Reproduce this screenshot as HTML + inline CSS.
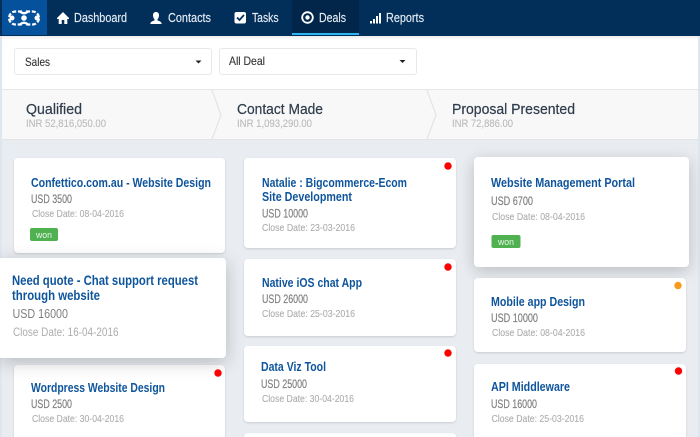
<!DOCTYPE html>
<html>
<head>
<meta charset="utf-8">
<style>
html,body{margin:0;padding:0;width:700px;height:437px;overflow:hidden;background:#e9edf1;font-family:"Liberation Sans",sans-serif}
#w{position:relative;width:700px;height:437px;overflow:hidden;background:#e9edf1}
.a{position:absolute;box-sizing:border-box}
.card{position:absolute;box-sizing:border-box;background:#fff;border-radius:4px;box-shadow:0 1px 2px rgba(0,0,0,.14)}
svg{position:absolute;left:0;top:0}
.t{font-size:12.5px;font-weight:700;fill:#0f559c}
.u{font-size:11.5px;fill:#808080;stroke:#808080;stroke-width:.18px}
.c{font-size:10.5px;fill:#adadad;stroke:#adadad;stroke-width:.1px}
.n{font-size:12.5px;fill:#e4ecf4;stroke:#e4ecf4;stroke-width:.15px}
.h{font-size:14.5px;fill:#2f3d4c;stroke:#2f3d4c;stroke-width:.2px}
.i{font-size:11px;fill:#bababa;stroke:#bababa;stroke-width:.1px}
.s{font-size:12px;fill:#333;stroke:#333;stroke-width:.12px}
</style>
</head>
<body>
<div id="w">
<div class="a" style="left:0;top:0;width:2px;height:437px;background:#dfe6ee"></div>
<div class="a" style="left:698px;top:0;width:2px;height:437px;background:#dfe6ee"></div>
<div class="a" style="left:2px;top:36px;width:696px;height:54px;background:#fff;box-shadow:inset 0 4px 3px -2px rgba(0,0,0,.08)"></div>
<div class="a" style="left:0;top:0;width:700px;height:35.5px;background:#022f5a"></div>
<div class="a" style="left:2px;top:0;width:45px;height:35px;background:#05519c"></div>
<div class="a" style="left:292px;top:0;width:67px;height:35px;background:#012649"></div>
<div class="a" style="left:292px;top:33px;width:67px;height:2px;background:#2db5f0"></div>
<div class="a" style="left:14px;top:48px;width:198px;height:27px;background:#fff;border:1px solid #e8e8e8;border-radius:3px"></div>
<div class="a" style="left:219px;top:48px;width:198px;height:27px;background:#fff;border:1px solid #e8e8e8;border-radius:3px"></div>
<div class="a" style="left:2px;top:89px;width:696px;height:51px;background:#f8f8f8;border-top:1.5px solid #e6e6e6;border-bottom:1.5px solid #e2e4e6"></div>

<div class="card" style="left:14px;top:158px;width:211px;height:95px"></div>
<div class="card" style="left:14px;top:365px;width:211px;height:80px"></div>
<div class="card" style="left:244px;top:158px;width:212px;height:90px"></div>
<div class="card" style="left:244px;top:259px;width:212px;height:77px"></div>
<div class="card" style="left:244px;top:346px;width:212px;height:76px"></div>
<div class="card" style="left:244px;top:433px;width:212px;height:20px"></div>
<div class="card" style="left:474px;top:157px;width:215px;height:110px;box-shadow:0 4px 16px rgba(0,0,0,.2)"></div>
<div class="card" style="left:474px;top:278px;width:212px;height:74px"></div>
<div class="card" style="left:474px;top:364px;width:212px;height:80px"></div>
<div class="card" style="left:0;top:258px;width:226px;height:100px;border-radius:0 4px 4px 0;box-shadow:0 4px 18px rgba(0,0,0,.22)"></div>

<svg width="700" height="437" viewBox="0 0 700 437" xmlns="http://www.w3.org/2000/svg">
<!-- logo -->
<g fill="none" stroke="#fff" stroke-width="2.2" stroke-dasharray="4 1.8">
<path d="M22 11.500H15.500a6.500 6.500 0 0 0 0 13H22"/>
<path d="M26 11.500H32.500a6.500 6.500 0 0 1 0 13H26"/>
<path d="M20 24.500Q24 21 28 24.500" stroke-dasharray="none"/>
<path d="M20 11.500Q24 15 28 11.500" stroke-dasharray="none"/>
</g>
<circle cx="12" cy="18" r="2.500" fill="#fff"/><circle cx="24" cy="18" r="2.800" fill="#fff"/><circle cx="37" cy="18" r="2.500" fill="#fff"/>

<!-- nav icons -->
<path d="M63 12 L57 18 V19 H58.700 V24 H61.700 V20 H64.300 V24 H67.300 V19 H69 V18 Z" fill="#fff"/>
<path d="M156 12c2 0 3 1.300 3 3.200s-.8 3.300-1.500 4v1.200c1.300.6 4 1 4.200 3.600h-11.400c.2-2.600 2.900-3 4.200-3.600v-1.200c-.7-.7-1.500-2.100-1.500-4s1-3.200 3-3.200z" fill="#fff"/>
<rect x="234.500" y="12" width="11.500" height="11.500" rx="2" fill="#fff"/>
<path d="M237 17.500l2.500 2.500 4.500-5" fill="none" stroke="#022f5a" stroke-width="1.700"/>
<circle cx="307.500" cy="17.500" r="5.300" fill="none" stroke="#fff" stroke-width="1.800"/>
<circle cx="307.500" cy="17.500" r="2.200" fill="#fff"/>
<g fill="#fff"><rect x="370" y="21" width="2" height="2.500"/><rect x="373" y="19" width="2" height="4.500"/><rect x="376" y="16" width="2" height="7.500"/><rect x="379" y="13" width="2" height="10.500"/></g>

<!-- nav text -->
<text class="n" x="74" y="22" textLength="53" lengthAdjust="spacingAndGlyphs">Dashboard</text>
<text class="n" x="168" y="22" textLength="43" lengthAdjust="spacingAndGlyphs">Contacts</text>
<text class="n" x="252" y="22" textLength="26.500" lengthAdjust="spacingAndGlyphs">Tasks</text>
<text class="n" x="319" y="22" textLength="27" lengthAdjust="spacingAndGlyphs">Deals</text>
<text class="n" x="386" y="22" textLength="38" lengthAdjust="spacingAndGlyphs">Reports</text>

<!-- selects -->
<text class="s" x="25" y="66" textLength="25" lengthAdjust="spacingAndGlyphs">Sales</text>
<path d="M195.500 60.500h6l-3 3z" fill="#222"/>
<text class="s" x="229" y="65" textLength="36" lengthAdjust="spacingAndGlyphs">All Deal</text>
<path d="M399.500 60h6l-3 3z" fill="#222"/>

<!-- stages -->
<path d="M212 90 L221 115 L212 139 M427 90 L436 115 L427 139" fill="none" stroke="#e4e4e4" stroke-width="1.200"/>
<text class="h" x="26" y="114" textLength="56" lengthAdjust="spacingAndGlyphs">Qualified</text>
<text class="i" x="26" y="127" textLength="80" lengthAdjust="spacingAndGlyphs">INR 52,816,050.00</text>
<text class="h" x="237" y="114" textLength="86" lengthAdjust="spacingAndGlyphs">Contact Made</text>
<text class="i" x="237" y="127" textLength="75" lengthAdjust="spacingAndGlyphs">INR 1,093,290.00</text>
<text class="h" x="452" y="114" textLength="123" lengthAdjust="spacingAndGlyphs">Proposal Presented</text>
<text class="i" x="452" y="127" textLength="61" lengthAdjust="spacingAndGlyphs">INR 72,886.00</text>

<!-- column 1 -->
<text class="t" x="31" y="187" textLength="180" lengthAdjust="spacingAndGlyphs">Confettico.com.au - Website Design</text>
<text class="u" x="31" y="203" textLength="41" lengthAdjust="spacingAndGlyphs">USD 3500</text>
<text class="c" x="32" y="217" textLength="92" lengthAdjust="spacingAndGlyphs">Close Date: 08-04-2016</text>
<rect x="30" y="228" width="28" height="13" rx="2" fill="#4fb150"/>
<text x="36" y="238" font-size="9.500" fill="#eaf6ea" textLength="16" lengthAdjust="spacingAndGlyphs">won</text>

<text x="12" y="285" font-size="13.500" font-weight="700" fill="#0f559c" textLength="186" lengthAdjust="spacingAndGlyphs">Need quote - Chat support request</text>
<text x="12" y="300" font-size="13.500" font-weight="700" fill="#0f559c" textLength="88" lengthAdjust="spacingAndGlyphs">through website</text>
<text x="12.500" y="318" font-size="13" fill="#808080" textLength="55.500" lengthAdjust="spacingAndGlyphs">USD 16000</text>
<text x="13" y="336" font-size="12" fill="#adadad" textLength="105.500" lengthAdjust="spacingAndGlyphs">Close Date: 16-04-2016</text>

<text class="t" x="31" y="392" textLength="134" lengthAdjust="spacingAndGlyphs">Wordpress Website Design</text>
<text class="u" x="31" y="408" textLength="41" lengthAdjust="spacingAndGlyphs">USD 2500</text>
<text class="c" x="32" y="422" textLength="92" lengthAdjust="spacingAndGlyphs">Close Date: 30-04-2016</text>
<circle cx="218" cy="373" r="3.700" fill="#f00"/>

<!-- column 2 -->
<text class="t" x="262" y="187" textLength="145" lengthAdjust="spacingAndGlyphs">Natalie : Bigcommerce-Ecom</text>
<text class="t" x="262" y="201" textLength="90" lengthAdjust="spacingAndGlyphs">Site Development</text>
<text class="u" x="262" y="217.500" textLength="46" lengthAdjust="spacingAndGlyphs">USD 10000</text>
<text class="c" x="262" y="231" textLength="93" lengthAdjust="spacingAndGlyphs">Close Date: 23-03-2016</text>
<circle cx="448" cy="166" r="3.700" fill="#f00"/>

<text class="t" x="262" y="287" textLength="100" lengthAdjust="spacingAndGlyphs">Native iOS chat App</text>
<text class="u" x="262" y="303" textLength="46" lengthAdjust="spacingAndGlyphs">USD 26000</text>
<text class="c" x="262" y="317" textLength="93" lengthAdjust="spacingAndGlyphs">Close Date: 25-03-2016</text>
<circle cx="448" cy="267" r="3.700" fill="#f00"/>

<text class="t" x="261" y="371" textLength="65" lengthAdjust="spacingAndGlyphs">Data Viz Tool</text>
<text class="u" x="261" y="388" textLength="46" lengthAdjust="spacingAndGlyphs">USD 25000</text>
<text class="c" x="262" y="402" textLength="92" lengthAdjust="spacingAndGlyphs">Close Date: 30-04-2016</text>
<circle cx="448" cy="353" r="3.700" fill="#f00"/>

<!-- column 3 -->
<text class="t" x="491" y="187" textLength="144" lengthAdjust="spacingAndGlyphs">Website Management Portal</text>
<text class="u" x="491" y="205" textLength="42" lengthAdjust="spacingAndGlyphs">USD 6700</text>
<text class="c" x="492" y="220" textLength="93" lengthAdjust="spacingAndGlyphs">Close Date: 08-04-2016</text>
<rect x="491.500" y="235" width="29" height="13" rx="2" fill="#4fb150"/>
<text x="498" y="245" font-size="9.500" fill="#eaf6ea" textLength="16" lengthAdjust="spacingAndGlyphs">won</text>

<text class="t" x="491" y="306" textLength="94" lengthAdjust="spacingAndGlyphs">Mobile app Design</text>
<text class="u" x="491" y="322" textLength="47" lengthAdjust="spacingAndGlyphs">USD 10000</text>
<text class="c" x="492" y="336" textLength="93" lengthAdjust="spacingAndGlyphs">Close Date: 08-04-2016</text>
<circle cx="678" cy="285.500" r="3.700" fill="#f89a1c"/>

<text class="t" x="491" y="391" textLength="79" lengthAdjust="spacingAndGlyphs">API Middleware</text>
<text class="u" x="491" y="408" textLength="46" lengthAdjust="spacingAndGlyphs">USD 16000</text>
<text class="c" x="491.500" y="422" textLength="92.500" lengthAdjust="spacingAndGlyphs">Close Date: 25-03-2016</text>
<circle cx="678.500" cy="371" r="3.700" fill="#f00"/>
</svg>
</div>
</body>
</html>
